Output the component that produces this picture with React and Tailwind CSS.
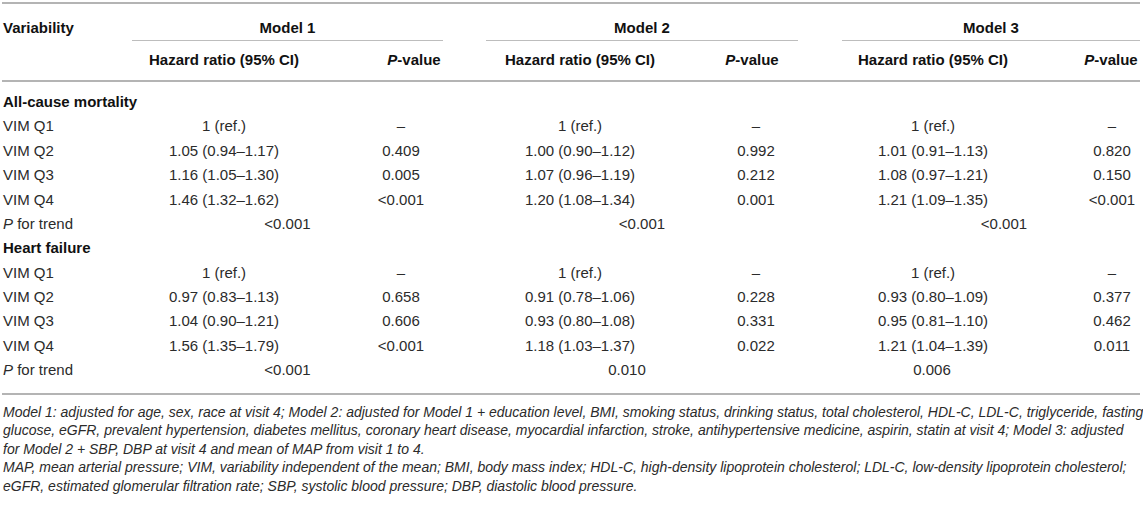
import React from "react";

const COLS = "grid grid-cols-[130px_184px_170px_188px_164px_190px_112px]";
const SPAN = "grid grid-cols-[130px_311px_43px_312px_44px_298px]";

const sections = [
  {
    title: "All-cause mortality",
    rows: [
      ["VIM Q1", "1 (ref.)", "–", "1 (ref.)", "–", "1 (ref.)", "–"],
      ["VIM Q2", "1.05 (0.94–1.17)", "0.409", "1.00 (0.90–1.12)", "0.992", "1.01 (0.91–1.13)", "0.820"],
      ["VIM Q3", "1.16 (1.05–1.30)", "0.005", "1.07 (0.96–1.19)", "0.212", "1.08 (0.97–1.21)", "0.150"],
      ["VIM Q4", "1.46 (1.32–1.62)", "<0.001", "1.20 (1.08–1.34)", "0.001", "1.21 (1.09–1.35)", "<0.001"],
    ],
    trend: ["<0.001", "<0.001", "<0.001"],
    trendCls: ["", "", "pl-[26px]"],
  },
  {
    title: "Heart failure",
    rows: [
      ["VIM Q1", "1 (ref.)", "–", "1 (ref.)", "–", "1 (ref.)", "–"],
      ["VIM Q2", "0.97 (0.83–1.13)", "0.658", "0.91 (0.78–1.06)", "0.228", "0.93 (0.80–1.09)", "0.377"],
      ["VIM Q3", "1.04 (0.90–1.21)", "0.606", "0.93 (0.80–1.08)", "0.331", "0.95 (0.81–1.10)", "0.462"],
      ["VIM Q4", "1.56 (1.35–1.79)", "<0.001", "1.18 (1.03–1.37)", "0.022", "1.21 (1.04–1.39)", "0.011"],
    ],
    trend: ["<0.001", "0.010", "0.006"],
    trendCls: ["", "pr-[30px]", "pr-[118px]"],
  },
];

function DataRow({ r }) {
  return (
    <div className={`${COLS} h-[24.4px] items-center`}>
      <div className="pl-[1px]">{r[0]}</div>
      <div className="text-center">{r[1]}</div>
      <div className="text-center">{r[2]}</div>
      <div className="text-center">{r[3]}</div>
      <div className="text-center">{r[4]}</div>
      <div className="text-center">{r[5]}</div>
      <div className="text-center pl-[56px]">{r[6]}</div>
    </div>
  );
}

const foot1 = [
  "Model 1: adjusted for age, sex, race at visit 4; Model 2: adjusted for Model 1 + education level, BMI, smoking status, drinking status, total cholesterol, HDL-C, LDL-C, triglyceride, fasting",
  "glucose, eGFR, prevalent hypertension, diabetes mellitus, coronary heart disease, myocardial infarction, stroke, antihypertensive medicine, aspirin, statin at visit 4; Model 3: adjusted",
  "for Model 2 + SBP, DBP at visit 4 and mean of MAP from visit 1 to 4.",
];
const foot2 = [
  "MAP, mean arterial pressure; VIM, variability independent of the mean; BMI, body mass index; HDL-C, high-density lipoprotein cholesterol; LDL-C, low-density lipoprotein cholesterol;",
  "eGFR, estimated glomerular filtration rate; SBP, systolic blood pressure; DBP, diastolic blood pressure.",
];

export default function App() {
  return (
    <div
      className="w-[1143px] h-[523px] bg-white text-[#2b2b2b] overflow-hidden"
      style={{ fontFamily: '"Liberation Sans", Arial, sans-serif' }}
    >
      <div className="ml-[2px] w-[1138px] pt-[2px]">
        <div className="border-t-2 border-[#b4b4b4]" />
        <div className={`${SPAN} text-[15px] font-bold text-[#111] h-[37px]`}>
          <div className="pl-[1px] pt-[13px]">Variability</div>
          <div className="border-b border-[#bdbdbd] text-center pt-[13px]">Model 1</div>
          <div />
          <div className="border-b border-[#bdbdbd] text-center pt-[13px]">Model 2</div>
          <div />
          <div className="border-b border-[#bdbdbd] text-center pt-[13px]">Model 3</div>
        </div>
        <div className={`${COLS} text-[15px] font-bold text-[#111] h-[41px] items-center border-b-2 border-[#b4b4b4]`}>
          <div />
          <div className="text-center">Hazard ratio (95% CI)</div>
          <div className="text-center pl-[26px]"><i>P</i>-value</div>
          <div className="text-center">Hazard ratio (95% CI)</div>
          <div className="text-center pr-[8px]"><i>P</i>-value</div>
          <div className="text-center">Hazard ratio (95% CI)</div>
          <div className="text-center pl-[54px]"><i>P</i>-value</div>
        </div>
        <div className="text-[15px] pt-[8px] pb-[10px] border-b-2 border-[#b4b4b4]">
          {sections.map((s) => (
            <div key={s.title}>
              <div className="h-[24.4px] flex items-center font-bold text-[#111] pl-[1px]">{s.title}</div>
              {s.rows.map((r, i) => (
                <DataRow key={i} r={r} />
              ))}
              <div className={`${SPAN} h-[24.4px] items-center`}>
                <div className="pl-[1px]"><i>P</i> for trend</div>
                <div className={`text-center ${s.trendCls[0]}`}>{s.trend[0]}</div>
                <div />
                <div className={`text-center ${s.trendCls[1]}`}>{s.trend[1]}</div>
                <div />
                <div className={`text-center ${s.trendCls[2]}`}>{s.trend[2]}</div>
              </div>
            </div>
          ))}
        </div>
        <div className="italic text-[14px] leading-[18.5px] pt-[8px] pl-[1px] text-[#2b2b2b]">
          <div>
            {foot1.map((t, i) => (
              <div key={i} className="whitespace-nowrap">{t}</div>
            ))}
          </div>
          <div>
            {foot2.map((t, i) => (
              <div key={i} className="whitespace-nowrap">{t}</div>
            ))}
          </div>
        </div>
      </div>
    </div>
  );
}
